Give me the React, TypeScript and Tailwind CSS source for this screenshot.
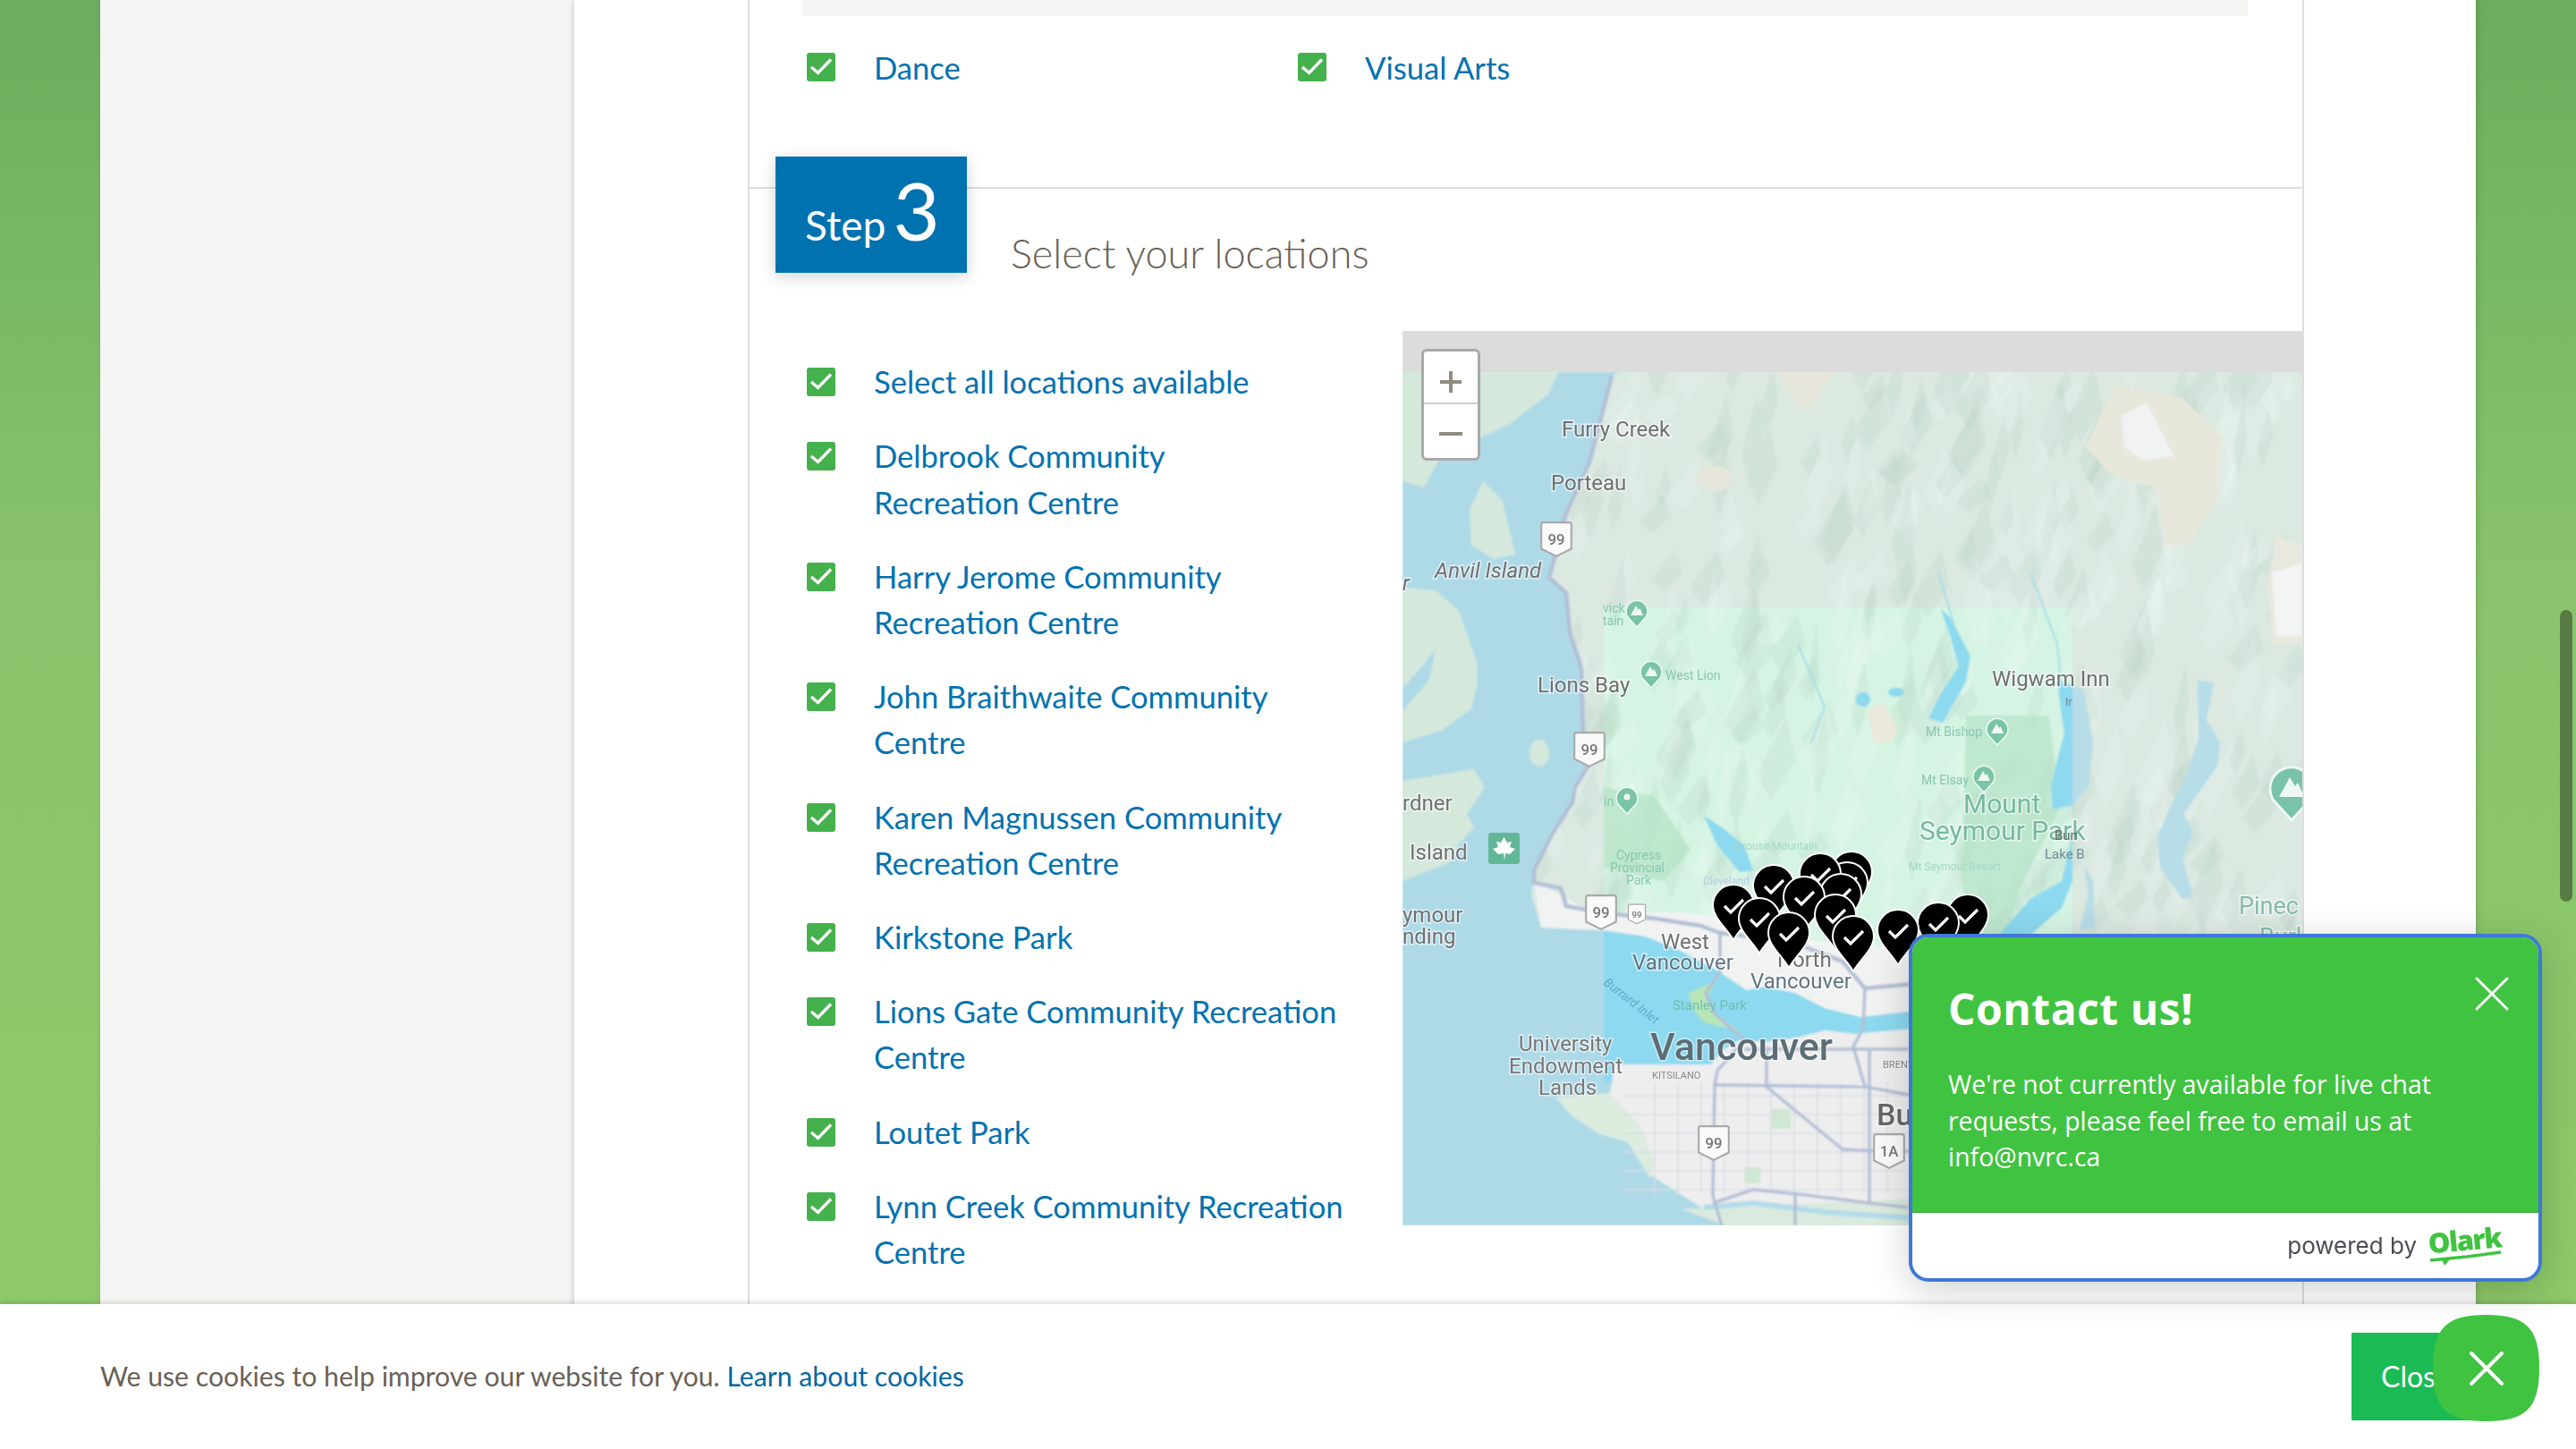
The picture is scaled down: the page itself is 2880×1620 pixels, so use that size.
import React from "react";

const locations = [
  ["Select all locations available"],
  ["Delbrook Community", "Recreation Centre"],
  ["Harry Jerome Community", "Recreation Centre"],
  ["John Braithwaite Community", "Centre"],
  ["Karen Magnussen Community", "Recreation Centre"],
  ["Kirkstone Park"],
  ["Lions Gate Community Recreation", "Centre"],
  ["Loutet Park"],
  ["Lynn Creek Community Recreation", "Centre"],
];

function Check() {
  return (
    <svg width="32" height="32" viewBox="0 0 32 32" className="block shrink-0">
      <rect width="32" height="32" rx="3" fill="#44b14c" />
      <path d="M5 16 L12.5 22.5 L27 7.5" fill="none" stroke="#fff" strokeWidth="3.4" />
    </svg>
  );
}

// seeded so the ridges come out the same every render
let seed = 11;
const rnd = () => {
  seed = (seed * 16807) % 2147483647;
  return seed / 2147483647;
};
const ridges = Array.from({ length: 460 }, () => {
  const x = 1568 + rnd() * 1010;
  const y = 416 + rnd() * 680;
  const w = 10 + rnd() * 24;
  const h = 24 + rnd() * 44;
  return {
    points: `${x},${y} ${x + w},${y - h} ${x + w * 1.35},${y - h * 0.25} ${x + w * 0.5},${y + h * 0.45}`,
    light: rnd() > 0.55,
  };
});

const coast =
  "M1568 416 L1812 416 L1802 420 L1777 517 L1751 574 L1732 646 L1751 663 L1755 707 L1768 747 L1770 820 L1775 857 L1761 880 L1758 897 L1735 933 L1715 973 L1712 1000 L1723 1037 L1793 1040 L1840 1047 L1873 1060 L1917 1083 L1953 1107 L1973 1103 L2007 1110 L2040 1127 L2080 1137 L2140 1130 L2140 1150 L2073 1156 L2040 1152 L2010 1160 L1975 1165 L1945 1163 L1925 1175 L1913 1190 L1805 1190 L1800 1225 L1740 1227 L1757 1247 L1787 1267 L1820 1277 L1830 1287 L1840 1310 L1907 1353 L1930 1370 L1568 1370 Z";

const roads = [
  "M1802 420 L1777 517 L1751 574 L1732 646 L1751 663 L1755 707 L1768 747 L1770 820 L1775 857 L1761 880 L1758 897 L1735 933 L1715 973 L1715 987 L1745 993 L1751 1013 L1788 1020 L1851 1027 L1901 1035 L1923 1043 L2000 1052 L2060 1075 L2085 1105 L2140 1100",
  "M1923 1043 L1923 1087 L1907 1110 L1917 1133 L1950 1163 L1920 1197 L1917 1213 L1915 1337 L1925 1370",
  "M2085 1105 L2083 1150 L2072 1170 L2085 1215 L2140 1225",
  "M1917 1213 L2085 1215",
  "M1975 1170 L1975 1215 L2060 1285 L2100 1287 L2134 1287",
  "M2090 1175 L2090 1345 L2134 1350",
  "M1915 1345 L1960 1330 L2010 1335 L2090 1345",
  "M2007 1335 L2007 1370",
  "M1950 1173 L2134 1173",
];

const streets: string[] = [];
for (let x = 1850; x < 2134; x += 26) streets.push(`M${x} 1210 L${x} 1335`);
for (let y = 1225; y < 1335; y += 21) streets.push(`M1815 ${y} L2134 ${y}`);

const lakes = [
  "M2170 681 L2180 690 L2203 733 L2198 762 L2182 790 L2172 808 L2156 803 L2170 775 L2190 745 L2180 710 Z",
  "M1905 912 L1925 925 L1950 945 L1960 973 L1945 975 L1920 945 Z",
  "M2300 760 L2317 766 L2317 900 L2295 905 L2293 880 L2300 850 L2308 820 L2305 800 Z",
  "M2317 935 L2305 985 L2270 1005 L2235 1045 L2270 1045 L2305 1015 L2317 985 Z",
  "M2330 967 L2340 985 L2342 1037 L2325 1040 L2335 1000 Z",
  "M2457 760 L2475 763 L2467 805 L2482 830 L2480 855 L2442 910 L2452 930 L2440 960 L2452 1003 L2440 1005 L2415 970 L2412 935 L2425 905 L2445 865 L2458 825 Z",
];

const pins = [
  [2070, 975],
  [2065, 987],
  [2035, 977],
  [2058, 1000],
  [1983, 990],
  [2017, 1003],
  [1938, 1012],
  [1967, 1027],
  [2052, 1023],
  [2000, 1043],
  [2072, 1047],
  [2200, 1023],
  [2167, 1032],
  [2122, 1040],
];

function Shield({ x, y, label, small }: { x: number; y: number; label: string; small?: boolean }) {
  const s = small ? 0.6 : 1.05;
  return (
    <g transform={`translate(${x} ${y}) scale(${s})`}>
      <path
        d="M-14 -18 H14 Q16 -18 16 -16 V10 L0 18 L-16 10 V-16 Q-16 -18 -14 -18Z"
        fill="#fafafa"
        stroke="#a9a9a9"
        strokeWidth="2"
      />
      <text textAnchor="middle" y="6" fontSize="16" fontWeight="500" fill="#777">
        {label}
      </text>
    </g>
  );
}

function Peak({ x, y, r = 11, dot }: { x: number; y: number; r?: number; dot?: boolean }) {
  return (
    <g transform={`translate(${x} ${y}) scale(${r / 11})`}>
      <path d="M0 16 L-10 5 A12 12 0 1 1 10 5 Z" fill="#79c4a6" stroke="#eef8f2" strokeWidth="1.5" />
      {dot ? (
        <circle r="3.5" cy="-3" fill="#eef8f2" />
      ) : (
        <path d="M-7 3 L-1 -8 L2 -3 L3.5 -5 L7 3Z" fill="#eef8f2" />
      )}
    </g>
  );
}

const labels: [string, number, number, number, string, boolean?][] = [
  ["Furry Creek", 1746, 480, 24, "#6f6f6f"],
  ["Porteau", 1734, 540, 24, "#6f6f6f"],
  ["Anvil Island", 1604, 638, 24, "#6f6f6f", true],
  ["r", 1568, 652, 24, "#6f6f6f", true],
  ["Lions Bay", 1719, 766, 24, "#6f6f6f"],
  ["Wigwam Inn", 2227, 759, 24, "#6f6f6f"],
  ["rdner", 1568, 898, 24, "#6f6f6f"],
  ["Island", 1576, 953, 24, "#6f6f6f"],
  ["ymour", 1568, 1023, 24, "#6f6f6f"],
  ["nding", 1568, 1047, 24, "#6f6f6f"],
  ["West", 1857, 1053, 24, "#6f6f6f"],
  ["Vancouver", 1825, 1076, 24, "#5f7480"],
  ["North", 1987, 1073, 24, "#6f6f6f"],
  ["Vancouver", 1957, 1097, 24, "#5f7480"],
  ["University", 1698, 1167, 24, "#777"],
  ["Endowment", 1687, 1192, 24, "#777"],
  ["Lands", 1720, 1216, 24, "#777"],
  ["Mount", 2195, 898, 30, "#74b9a0"],
  ["Seymour Park", 2146, 928, 30, "#74b9a0"],
  ["Pinec", 2503, 1013, 27, "#86bcae"],
  ["Burl", 2526, 1048, 27, "#86bcae"],
  ["Bu", 2098, 1246, 34, "#666"],
];

const tinyLabels: [string, number, number, number, string][] = [
  ["West Lion", 1862, 755, 14, "#88c7b0"],
  ["Mt Bishop", 2153, 818, 14, "#88c7b0"],
  ["Mt Elsay", 2148, 872, 14, "#88c7b0"],
  ["vick", 1792, 680, 14, "#88c7b0"],
  ["tain", 1792, 694, 14, "#88c7b0"],
  ["in", 1793, 896, 14, "#88c7b0"],
  ["Cypress", 1807, 956, 14, "#88c7b0"],
  ["Provincial", 1800, 970, 14, "#88c7b0"],
  ["Park", 1818, 984, 14, "#88c7b0"],
  ["Stanley Park", 1870, 1124, 15, "#6fc0b0"],
  ["Grouse Mountain", 1940, 946, 12, "#a5d8c5"],
  ["Cleveland Dam", 1904, 985, 12, "#b9c9e8"],
  ["Mt Seymour Resort", 2134, 969, 12, "#a5d8c5"],
  ["KITSILANO", 1847, 1202, 11, "#888"],
  ["BRENT", 2105, 1190, 11, "#888"],
  ["Ir", 2309, 784, 13, "#6f8a94"],
];

function MapPanel() {
  return (
    <svg
      viewBox="1568 370 1006 1000"
      width="1006"
      height="1000"
      className="block shrink-0 font-['Roboto',sans-serif]"
    >
      <defs>
        <filter id="soft">
          <feGaussianBlur stdDeviation="1.3" />
        </filter>
        <filter id="softer">
          <feGaussianBlur stdDeviation="0.45" />
        </filter>
        <clipPath id="mapArea">
          <rect x="1568" y="416" width="1006" height="954" />
        </clipPath>
        <clipPath id="tileLow">
          <rect x="1793" y="1030" width="524" height="180" />
        </clipPath>
        <path id="water" d={coast} />
      </defs>
      <rect x="1568" y="370" width="1006" height="46" fill="#dcdcdc" />
      <rect x="1568" y="416" width="1006" height="954" fill="#dbe9e1" />
      <rect x="1793" y="679" width="524" height="530" fill="#d6f4e4" />
      <g clipPath="url(#mapArea)">
        <g filter="url(#soft)">
          {ridges.map((r, i) => (
            <polygon
              key={i}
              points={r.points}
              fill={r.light ? "#f0fbf4" : "#a9c7b6"}
              opacity={r.light ? 0.2 : 0.16}
            />
          ))}
          <path d="M1793 880 L1850 890 L1890 950 L1860 985 L1793 970Z" fill="#b5e3c7" opacity="0.75" />
          <path d="M2198 800 L2290 800 L2305 900 L2255 1000 L2240 1080 L2195 1070 L2195 940Z" fill="#b5e3c7" opacity="0.7" />
          {/* beige high ground and snow */}
          <path d="M2332 500 L2365 431 L2440 445 L2485 490 L2478 560 L2445 610 L2420 610 L2410 545 L2360 530Z" fill="#e7e7dc" />
          <path d="M2372 465 L2400 450 L2430 510 L2395 515 L2375 500Z" fill="#f1f3f3" />
          <path d="M2545 600 L2574 610 L2574 717 L2540 720 L2536 650Z" fill="#e9e8de" />
          <path d="M2540 640 L2574 630 L2574 710 L2545 712Z" fill="#f3f4f4" />
          <ellipse cx="1917" cy="535" rx="20" ry="14" fill="#e6e6dc" />
          <path d="M1985 416 L2050 416 L2025 455 L2010 455Z" fill="#e6e6dc" />
          <path d="M2088 795 L2105 785 L2122 815 L2115 830 L2095 830Z" fill="#ebe8dc" />
          {/* coast, city and islands */}
          <use href="#water" fill="#aedae8" />
          <use href="#water" fill="#8dd9ef" clipPath="url(#tileLow)" />
          <path d="M1568 416 L1742 416 L1732 440 L1688 474 L1611 510 L1592 545 L1568 538Z" fill="#d4e8dc" />
          <path d="M1643 570 L1658 538 L1680 560 L1694 620 L1670 625 L1645 610Z" fill="#d4e8dc" />
          <path d="M1568 657 L1605 660 L1631 683 L1651 740 L1651 767 L1645 793 L1611 817 L1568 830Z" fill="#d4e8dc" />
          <path d="M1568 770 L1590 745 L1605 725 L1598 760 L1568 795Z" fill="#aedae8" />
          <ellipse cx="1721" cy="842" rx="11" ry="15" fill="#d4e8dc" />
          <path d="M1568 873 L1648 860 L1660 880 L1640 910 L1648 925 L1630 945 L1620 965 L1568 985Z" fill="#d4e8dc" />
          <path d="M1715 985 L1780 1020 L1880 1020 L1960 1030 L2000 1050 L2140 1060 L2140 1130 L2080 1137 L2040 1127 L2007 1110 L1973 1103 L1953 1107 L1917 1083 L1873 1060 L1840 1047 L1793 1040 L1723 1037Z" fill="#f1f3f2" />
          <path d="M1800 1225 L1805 1190 L1913 1190 L1925 1175 L1945 1163 L1975 1165 L2010 1160 L2040 1152 L2073 1156 L2140 1150 L2140 1370 L1930 1370 L1907 1353 L1840 1310 L1830 1287 L1820 1277 Z" fill="#eeeeee" />
          <path d="M1740 1227 L1800 1222 L1835 1260 L1850 1300 L1845 1318 L1820 1277 L1787 1267 L1757 1247Z" fill="#dcecdf" />
          <path d="M1880 1352 L2140 1340 L2140 1370 L1930 1370Z" fill="#dbeade" />
          <path d="M1905 1350 L1960 1345 L2040 1355 L2140 1362" stroke="#b4dceb" strokeWidth="6" fill="none" />
          <path d="M1893 1128 L1888 1110 L1918 1097 L1908 1118 L1920 1135 L1945 1153 L1905 1143Z" fill="#b9e6b6" />
          <rect x="1980" y="1240" width="22" height="22" fill="#cfe8d3" />
          <rect x="1950" y="1305" width="18" height="18" fill="#cfe8d3" />
          {lakes.map((d, i) => (
            <path key={i} d={d} fill={i >= 4 ? "#b7dde8" : "#8dd9ef"} />
          ))}
          <path d="M2317 766 L2330 772 L2340 830 L2335 880 L2317 900Z" fill="#b7dde8" />
          <circle cx="2083" cy="782" r="8" fill="#8dd9ef" />
          <ellipse cx="2120" cy="774" rx="9" ry="5" fill="#8dd9ef" />
          <path d="M2167 640 L2185 700 M2270 640 L2300 720 L2305 770 M2010 720 L2040 790 L2025 830" stroke="#a7dcea" strokeWidth="2" fill="none" />
          {streets.map((d, i) => (
            <path key={i} d={d} stroke="#dadde3" strokeWidth="1.6" fill="none" />
          ))}
          {roads.map((d, i) => (
            <path key={i} d={d} stroke="#b4bfd6" strokeWidth={i === 0 ? 4.5 : 3.5} fill="none" />
          ))}
        </g>
      </g>
      <g filter="url(#softer)">
        <Shield x={1740} y={603} label="99" />
        <Shield x={1777} y={838} label="99" />
        <Shield x={1790} y={1020} label="99" />
        <Shield x={1830} y={1022} label="99" small />
        <Shield x={1916} y={1278} label="99" />
        <Shield x={2112} y={1287} label="1A" />
        <Peak x={1830} y={685} />
        <Peak x={1846} y={753} />
        <Peak x={1819} y={894} dot />
        <Peak x={2233} y={817} />
        <Peak x={2218} y={870} />
        <Peak x={2562} y={885} r={22} />
        <rect x="1664" y="931" width="35" height="35" rx="3" fill="#62b797" />
        <path d="M1681.5 936 L1685 942 L1690 941 L1688 947 L1694 949 L1688 955 L1683 954 L1682 962 L1681 954 L1675 955 L1669 949 L1675 947 L1673 941 L1678 942Z" fill="#fff" />
        {labels.map(([t, x, y, size, fill, italic], i) => (
          <text
            key={i}
            x={x}
            y={y}
            fontSize={size}
            fill={fill}
            fontStyle={italic ? "italic" : "normal"}
            fontWeight={size > 33 ? 500 : 400}
            dominantBaseline="central"
            stroke="#ffffff"
            strokeOpacity="0.6"
            strokeWidth="3"
            paintOrder="stroke"
          >
            {t}
          </text>
        ))}
        <text x="1845" y="1170" fontSize="43" fontWeight="500" fill="#5d6d75" dominantBaseline="central" stroke="#fff" strokeOpacity="0.5" strokeWidth="3" paintOrder="stroke">
          Vancouver
        </text>
        {tinyLabels.map(([t, x, y, size, fill], i) => (
          <text key={i} x={x} y={y} fontSize={size} fill={fill} dominantBaseline="central">
            {t}
          </text>
        ))}
        <text transform="translate(1792 1100) rotate(38)" fontSize="14" fontStyle="italic" fill="#5aaec9">
          Burrard Inlet
        </text>
        <text x="2286" y="955" fontSize="15" fill="#6f8a94" dominantBaseline="central">
          Lake B
        </text>
        <text x="2297" y="934" fontSize="15" fill="#666" dominantBaseline="central">
          Bun
        </text>
      </g>
      <g filter="url(#softer)">
        {pins.map(([x, y], i) => (
          <g key={i}>
            <path
              d={`M${x} ${y + 39} C${x - 8} ${y + 25} ${x - 23} ${y + 14} ${x - 23} ${y} A23 23 0 1 1 ${x + 23} ${y} C${x + 23} ${y + 14} ${x + 8} ${y + 25} ${x} ${y + 39}Z`}
              fill="#000"
              stroke="#fff"
              strokeWidth="2"
            />
            <path d={`M${x - 10} ${y + 1} L${x - 3} ${y + 8} L${x + 11} ${y - 6}`} fill="none" stroke="#fff" strokeWidth="3.2" />
          </g>
        ))}
      </g>
    </svg>
  );
}

function ZoomControl() {
  return (
    <div className="absolute left-[21px] top-[20px] w-[66px] rounded-[6px] border-[3px] border-[#a9a9a9] bg-white">
      <div className="flex h-[59px] items-center justify-center border-b-2 border-[#cccccc] pt-[10px] text-[#8f8b80]">
        <svg width="26" height="26" viewBox="0 0 26 26">
          <path d="M13 1 V25 M1 13 H25" stroke="currentColor" strokeWidth="4" />
        </svg>
      </div>
      <div className="flex h-[60px] items-center justify-center pt-[6px] text-[#8f8b80]">
        <svg width="26" height="26" viewBox="0 0 26 26">
          <path d="M0 13 H26" stroke="currentColor" strokeWidth="4" />
        </svg>
      </div>
    </div>
  );
}

function ChatWidget() {
  return (
    <div className="absolute left-[2134px] top-[1044px] flex h-[389px] w-[708px] flex-col overflow-hidden rounded-[22px] border-4 border-[#3f78d6] bg-white font-['Open_Sans',sans-serif] shadow-[0_10px_44px_rgba(0,0,0,0.18)]">
      <div className="relative h-[308px] border-b border-[#3aa63a] bg-[#40c340] pl-[40px] text-white">
        <h2 className="pt-[49px] text-[48px] font-bold leading-[62px] tracking-[0.5px]">Contact us!</h2>
        <p className="mt-[33px] text-[28.4px] leading-[40.7px]">
          We're not currently available for live chat
          <br />
          requests, please feel free to email us at
          <br />
          info@nvrc.ca
        </p>
        <svg width="38" height="38" viewBox="0 0 38 38" className="absolute right-[33px] top-[44px]">
          <path d="M2 2 L36 36 M36 2 L2 36" stroke="#fff" strokeWidth="3" strokeLinecap="round" />
        </svg>
      </div>
      <div className="flex flex-1 items-center justify-end gap-[12px] pr-[40px]">
        <span className="font-['Inter',sans-serif] text-[26px] text-[#4c4c54]">powered by</span>
        <svg width="84" height="46" viewBox="0 0 84 46" className="block">
          <g transform="rotate(-5 42 20)">
            <text x="1" y="28" fontSize="31" fontWeight="800" fill="#40c340" fontFamily="'Open Sans', sans-serif" letterSpacing="-1.5">
              Olark
            </text>
          </g>
          <path d="M3 39 L44 35 L82 30" stroke="#40c340" strokeWidth="3.5" fill="none" />
          <path d="M16 38 L19 45 L26 37Z" fill="#40c340" />
        </svg>
      </div>
    </div>
  );
}

function CookieBar() {
  return (
    <div className="absolute inset-x-0 bottom-0 flex h-[162px] items-center justify-between bg-white pl-[112px] pr-[111px] text-[#6b5f56] shadow-[0_-2px_6px_rgba(0,0,0,0.14)]">
      <p className="-mt-[2px] text-[30.2px] leading-[51px]">
        We use cookies to help improve our website for you.{" "}
        <span className="text-[#0067a3]">Learn about cookies</span>
      </p>
      <div className="flex h-[98px] w-[140px] items-center bg-[#1aba54] pl-[33px] text-[32px] text-white">Close</div>
    </div>
  );
}

export default function App() {
  return (
    <div className="relative flex h-[1620px] w-[2880px] overflow-hidden bg-gradient-to-b from-[#6bad5e] via-[#89c46c] via-[40%] to-[#8fca69] px-[112px] font-['Lato',sans-serif]">
      <aside className="w-[530px] shrink-0 bg-[#f5f5f3] shadow-[2px_0_6px_rgba(0,0,0,0.2)]" />

      <main className="flex-1 bg-white pl-[194px] shadow-[0_0_8px_rgba(0,0,0,0.2)]">
        <div className="h-[1620px] w-[1740px] border-x-2 border-[#dedede]">
          <div className="ml-[59px] h-[18px] w-[1616px] bg-[#f5f5f3]" />

          <div className="ml-[64px] mt-[32px] grid w-[1098px] grid-cols-2 text-[34.6px] leading-[51.2px] text-[#0072b0]">
            {["Dance", "Visual Arts"].map((name) => (
              <label key={name} className="flex gap-[43px]">
                <span className="pt-[9px]">
                  <Check />
                </span>
                {name}
              </label>
            ))}
          </div>

          <section className="mt-[108px] border-t-2 border-[#dedede]">
            <header className="flex h-[94px]">
              <div className="z-10 -mt-[36px] ml-[29px] flex h-[130px] w-[214px] items-baseline gap-[8px] bg-[#0072b0] pl-[33px] pt-[9px] text-white shadow-[0_4px_16px_rgba(0,0,0,0.18)]">
                <span className="text-[46px] leading-[100px]">Step</span>
                <span className="text-[90px] leading-[100px]">3</span>
              </div>
              <h2 className="ml-[49px] mt-[45px] h-[54px] whitespace-nowrap text-[45px] font-light leading-[54px] text-[#6b5f56]">
                Select your locations
              </h2>
            </header>

            <div className="mt-[65px] flex">
              <ul className="ml-[64px] w-[666px] pt-[31px] text-[34.6px] leading-[51.2px] text-[#0072b0]">
                {locations.map((lines) => (
                  <li key={lines[0]} className="mb-[32px] flex gap-[43px]">
                    <span className="pt-[10px]">
                      <Check />
                    </span>
                    <span>
                      {lines.map((line) => (
                        <span key={line} className="block whitespace-nowrap">
                          {line}
                        </span>
                      ))}
                    </span>
                  </li>
                ))}
              </ul>
              <div className="relative">
                <MapPanel />
                <ZoomControl />
              </div>
            </div>
          </section>
        </div>
      </main>

      <div className="absolute right-[4px] top-[682px] h-[326px] w-[14px] rounded-full bg-[#587a43]" />

      <CookieBar />
      <ChatWidget />

      <svg width="119" height="119" viewBox="0 0 119 119" className="absolute left-[2720px] top-[1470px]">
        <path d="M59.5 0 C104 0 119 15 119 59.5 C119 104 104 119 59.5 119 C15 119 0 104 0 59.5 C0 15 15 0 59.5 0Z" fill="#40c340" />
        <path d="M43 43 L77 77 M77 43 L43 77" stroke="#fff" strokeWidth="4" strokeLinecap="round" />
      </svg>
    </div>
  );
}
